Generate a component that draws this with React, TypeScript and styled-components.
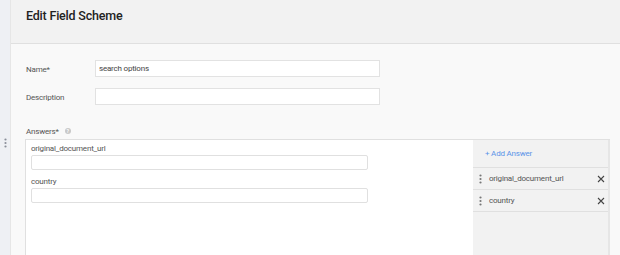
import styled, { createGlobalStyle } from "styled-components";

const GlobalStyle = createGlobalStyle`
  html, body { margin: 0; padding: 0; }
  body {
    font-family: Roboto, "Liberation Sans", Arial, sans-serif;
    color: #333;
    background: #f9f9f9;
    overflow: hidden;
  }
`;

const Page = styled.div`
  display: flex;
  width: 620px;
  height: 255px;
  overflow: hidden;
`;

const Sidebar = styled.div`
  width: 11px;
  flex: 0 0 11px;
  background: #eef0f4;
  border-right: 1px solid #e6e6e6;
  display: flex;
  flex-direction: column;
  align-items: center;
  padding-top: 138px;
  box-sizing: border-box;
`;

const Main = styled.div`
  flex: 1;
  display: flex;
  flex-direction: column;
  min-width: 0;
`;

const Header = styled.div`
  height: 44px;
  flex: 0 0 44px;
  box-sizing: border-box;
  background: #f2f2f2;
  border-bottom: 1px solid #e0e0e0;
  padding: 8px 0 0 15px;
`;

const Title = styled.h1`
  margin: 0;
  font-size: 12.5px;
  font-weight: 500;
  letter-spacing: -0.2px;
  color: #222;
`;

const Content = styled.div`
  padding: 16px 10px 0 15px;
  display: flex;
  flex-direction: column;
  font-size: 8px;
  letter-spacing: -0.2px;
  color: #555;
`;

const FormRow = styled.div`
  display: flex;
  align-items: center;
  margin-bottom: 11px;
`;

const Label = styled.label`
  width: 69px;
  padding-top: 2px;
`;

const TextInput = styled.div<{ $width: number }>`
  width: ${(p) => p.$width}px;
  height: 17px;
  box-sizing: border-box;
  background: #fff;
  border: 1px solid #e2e2e2;
  color: #444;
  padding: 0 3px;
  display: flex;
  align-items: center;
`;

const AnswersLabel = styled.div`
  margin-top: 10px;
  display: flex;
  align-items: center;
  gap: 6px;
  height: 10px;
`;

const Help = styled.span`
  width: 6px;
  height: 6px;
  border-radius: 50%;
  background: #c8c8c8;
  color: #fff;
  font-size: 5px;
  font-weight: 700;
  display: inline-flex;
  align-items: center;
  justify-content: center;
`;

const Box = styled.div`
  margin: 3px 0 0 -1px;
  display: flex;
  height: 140px;
  border: 1px solid #e0e0e0;
  border-right: none;
`;

const Fields = styled.div`
  flex: 1;
  background: #fff;
  padding: 3px 0 0 5px;
`;

const Field = styled.div`
  margin-bottom: 6px;
`;

const FieldLabel = styled.div`
  line-height: 11px;
  margin-bottom: 1px;
`;

const FieldInput = styled.div`
  width: 337px;
  height: 15px;
  box-sizing: border-box;
  border: 1px solid #e0e0e0;
  border-radius: 2px;
  background: #fff;
`;

const Side = styled.div`
  width: 137px;
  flex: 0 0 137px;
  background: #f2f2f2;
  border-right: 2px solid #e6e6e6;
  box-sizing: border-box;
`;

const AddButton = styled.div`
  height: 28px;
  box-sizing: border-box;
  border-bottom: 1px solid #e0e0e0;
  padding-left: 12px;
  display: flex;
  align-items: center;
  color: #5b93e8;
`;

const Row = styled.div`
  height: 22px;
  box-sizing: border-box;
  border-bottom: 1px solid #e0e0e0;
  display: flex;
  align-items: center;
  padding: 0 3px 0 6px;
`;

const RowText = styled.span`
  flex: 1;
  margin-left: 7px;
`;

function Dots({ color = "#777" }: { color?: string }) {
  return (
    <svg width="3" height="10" viewBox="0 0 3 10">
      <circle cx="1.5" cy="1.5" r="1.1" fill={color} />
      <circle cx="1.5" cy="5" r="1.1" fill={color} />
      <circle cx="1.5" cy="8.5" r="1.1" fill={color} />
    </svg>
  );
}

function Close() {
  return (
    <svg width="8" height="8" viewBox="0 0 8 8">
      <path d="M1 1L7 7M7 1L1 7" stroke="#444" strokeWidth="1.1" />
    </svg>
  );
}

const answers = ["original_document_url", "country"];

export default function App() {
  return (
    <Page>
      <GlobalStyle />
      <Sidebar>
        <Dots color="#8a8f99" />
      </Sidebar>
      <Main>
        <Header>
          <Title>Edit Field Scheme</Title>
        </Header>
        <Content>
          <FormRow>
            <Label>Name*</Label>
            <TextInput $width={285}>search options</TextInput>
          </FormRow>
          <FormRow>
            <Label>Description</Label>
            <TextInput $width={285} />
          </FormRow>
          <AnswersLabel>
            Answers* <Help>?</Help>
          </AnswersLabel>
          <Box>
            <Fields>
              {answers.map((a) => (
                <Field key={a}>
                  <FieldLabel>{a}</FieldLabel>
                  <FieldInput />
                </Field>
              ))}
            </Fields>
            <Side>
              <AddButton>+ Add Answer</AddButton>
              {answers.map((a) => (
                <Row key={a}>
                  <Dots />
                  <RowText>{a}</RowText>
                  <Close />
                </Row>
              ))}
            </Side>
          </Box>
        </Content>
      </Main>
    </Page>
  );
}
